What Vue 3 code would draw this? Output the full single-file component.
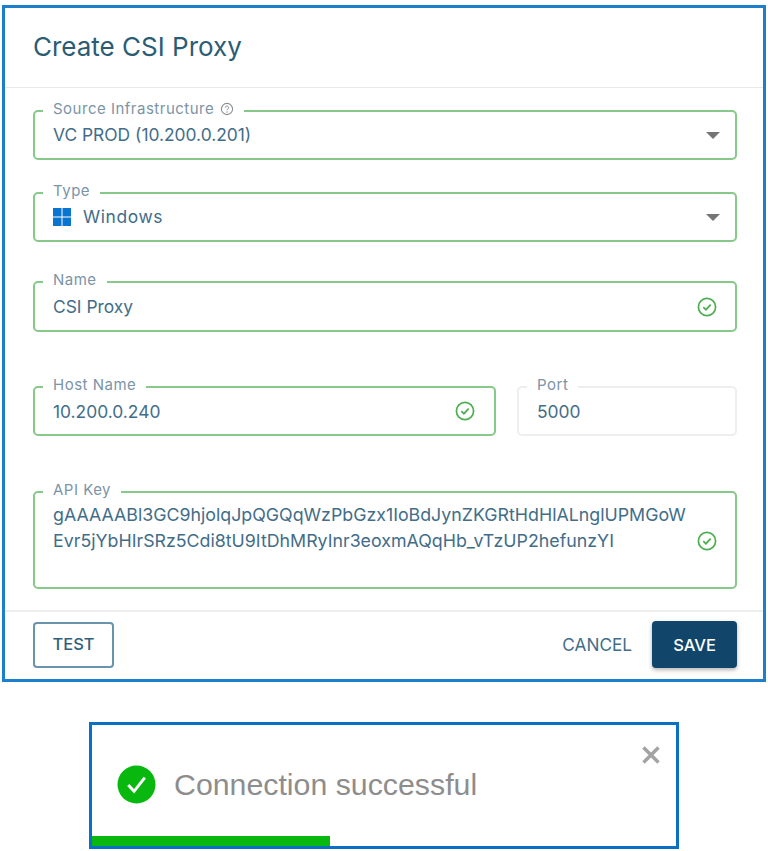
<template>
  <div class="page">
    <section class="dialog">
      <header class="dialog-header">
        <h1>Create CSI Proxy</h1>
      </header>

      <div class="dialog-body">
        <div class="field valid h-50 gap-32">
          <span class="label">
            Source Infrastructure
            <svg class="help" viewBox="0 0 14 14" width="14" height="14">
              <circle cx="7" cy="7" r="5.6" fill="none" stroke="#8a8f94" stroke-width="1.1" />
              <path d="M5.4 5.6a1.6 1.6 0 1 1 2.5 1.3c-.6.4-.9.7-.9 1.3" fill="none" stroke="#8a8f94" stroke-width="1" />
              <circle cx="7" cy="10" r=".7" fill="#8a8f94" />
            </svg>
          </span>
          <span class="value">VC PROD (10.200.0.201)</span>
          <span class="caret"></span>
        </div>

        <div class="field valid h-50 gap-39">
          <span class="label">Type</span>
          <span class="value with-icon">
            <svg class="win" viewBox="0 0 18 18" width="18" height="18">
              <path fill="#0a74d1" d="M0 0h8.5v8.5H0zM9.5 0H18v8.5H9.5zM0 9.500h8.500V18H0zM9.500 9.500H18V18H9.500z" />
            </svg>
            Windows
          </span>
          <span class="caret"></span>
        </div>

        <div class="field valid h-51 gap-54">
          <span class="label">Name</span>
          <span class="value shifted">CSI Proxy</span>
          <svg class="check" viewBox="0 0 20 20" width="20" height="20">
            <circle cx="10" cy="10" r="8.600" />
            <path d="M6.300 10.200l2.600 2.500 4.800-5" />
          </svg>
        </div>

        <div class="row gap-55">
          <div class="field valid h-50 host">
            <span class="label">Host Name</span>
            <span class="value shifted">10.200.0.240</span>
            <svg class="check" viewBox="0 0 20 20" width="20" height="20">
              <circle cx="10" cy="10" r="8.600" />
              <path d="M6.300 10.200l2.600 2.500 4.800-5" />
            </svg>
          </div>
          <div class="field h-50 port">
            <span class="label">Port</span>
            <span class="value shifted">5000</span>
          </div>
        </div>

        <div class="field valid api">
          <span class="label">API Key</span>
          <p class="key">gAAAAABl3GC9hjolqJpQGQqWzPbGzx1IoBdJynZKGRtHdHlALnglUPMGoW<br />Evr5jYbHIrSRz5Cdi8tU9ItDhMRyInr3eoxmAQqHb_vTzUP2hefunzYI</p>
          <svg class="check" viewBox="0 0 20 20" width="20" height="20">
            <circle cx="10" cy="10" r="8.600" />
            <path d="M6.300 10.200l2.600 2.500 4.800-5" />
          </svg>
        </div>
      </div>

      <footer class="dialog-footer">
        <button class="btn-test">TEST</button>
        <div class="actions">
          <button class="btn-cancel">CANCEL</button>
          <button class="btn-save">SAVE</button>
        </div>
      </footer>
    </section>

    <section class="toast">
      <div class="toast-main">
        <svg viewBox="0 0 40 40" width="39" height="39">
          <circle cx="20" cy="20" r="19.500" fill="#09b80f" />
          <path d="M11.500 20.500l6 6.500 11-14" fill="none" stroke="#fff" stroke-width="3" />
        </svg>
        <span>Connection successful</span>
      </div>
      <svg class="close" viewBox="0 0 20 20" width="20" height="20">
        <path d="M2.500 2.500l15 15M17.500 2.500l-15 15" stroke="#a3a3a3" stroke-width="3.500" fill="none" />
      </svg>
      <div class="progress"></div>
    </section>
  </div>
</template>

<script setup>
</script>

<style>
body {
  background: #fff;
}
</style>

<style scoped>
.page {
  width: 768px;
  height: 851px;
  padding: 5px 2px 0;
  box-sizing: border-box;
  font-family: Inter, "Liberation Sans", sans-serif;
  color: #426d89;
  overflow: hidden;
}

.dialog {
  width: 764px;
  height: 677px;
  box-sizing: border-box;
  border: 3px solid #1b7fcc;
  background: #fff;
  display: flex;
  flex-direction: column;
}

.dialog-header {
  height: 80px;
  box-sizing: border-box;
  padding: 23px 28px 0;
  border-bottom: 1px solid #e6e8ea;
}

h1 {
  margin: 0;
  font-size: 26px;
  line-height: 32px;
  font-weight: 400;
  color: #2b5c75;
}

.dialog-body {
  flex: 1;
  padding: 22px 26px 0 28px;
}

.field {
  position: relative;
  box-sizing: border-box;
  border: 2px solid #eceef0;
  border-radius: 5px;
  display: flex;
  align-items: center;
  padding: 0 18px 0 18px;
}

.valid {
  border-color: #86c988;
}

.h-50 { height: 50px; }
.h-51 { height: 51px; }
.gap-32 { margin-bottom: 32px; }
.gap-39 { margin-bottom: 39px; }
.gap-54 { margin-bottom: 54px; }
.gap-55 { margin-bottom: 55px; }

.label {
  position: absolute;
  top: -12px;
  left: 8px;
  padding: 0 10px;
  background: #fff;
  font-size: 15px;
  letter-spacing: 0.5px;
  line-height: 18px;
  color: #7b94a6;
  display: flex;
  align-items: center;
  gap: 6px;
}

.value {
  flex: 1;
  font-size: 17.400px;
  line-height: 24px;
  margin-top: -1px;
}

.shifted {
  margin-top: 1px;
}

.with-icon {
  display: flex;
  align-items: center;
  gap: 12px;
  letter-spacing: 0.6px;
}

.caret {
  width: 0;
  height: 0;
  border-left: 7px solid transparent;
  border-right: 7px solid transparent;
  border-top: 7px solid #757575;
  margin-right: -3px;
}

.check {
  flex: none;
  fill: none;
  stroke: #4cae50;
  stroke-width: 1.700;
}

.host .check {
  margin-right: 1px;
}

.row {
  display: flex;
  gap: 21px;
}

.host {
  width: 463px;
}

.port {
  flex: 1;
}

.api {
  height: 98px;
  align-items: flex-start;
  padding-top: 9px;
}

.api .check {
  margin-top: 29px;
}

.key {
  flex: 1;
  margin: 0;
  font-size: 17.800px;
  line-height: 26px;
  white-space: nowrap;
}

.dialog-footer {
  height: 69px;
  box-sizing: border-box;
  border-top: 2px solid #eceef0;
  padding: 9px 26px 0 28px;
  display: flex;
  justify-content: space-between;
  align-items: flex-start;
}

button {
  font-family: inherit;
  font-size: 16.500px;
  font-weight: 500;
  border-radius: 4px;
  cursor: pointer;
}

.btn-test {
  width: 81px;
  height: 46px;
  margin-top: 1px;
  padding: 0 0 2px;
  background: #fff;
  color: #2f5f7d;
  border: 2px solid #6a93ad;
}

.actions {
  display: flex;
  align-items: center;
  gap: 20px;
}

.btn-cancel {
  background: none;
  border: none;
  padding: 0;
  color: #426d89;
  font-weight: 400;
  font-size: 17.200px;
}

.btn-save {
  width: 85px;
  height: 47px;
  background: #11466a;
  color: #fff;
  border: none;
  box-shadow: 0 2px 4px rgba(0, 0, 0, 0.3);
}

.toast {
  position: relative;
  width: 590px;
  height: 127px;
  box-sizing: border-box;
  margin: 40px 0 0 87px;
  border: 3px solid #0a70c4;
  background: #fff;
}

.toast-main {
  display: flex;
  align-items: center;
  gap: 18px;
  padding: 40px 0 0 25px;
  font-family: "Liberation Sans", Arial, sans-serif;
  font-size: 30.300px;
  color: #8d8d8d;
}

.close {
  position: absolute;
  top: 20px;
  right: 15px;
}

.progress {
  position: absolute;
  left: 0;
  bottom: 0;
  width: 238px;
  height: 10px;
  background: #09b80f;
}
</style>
